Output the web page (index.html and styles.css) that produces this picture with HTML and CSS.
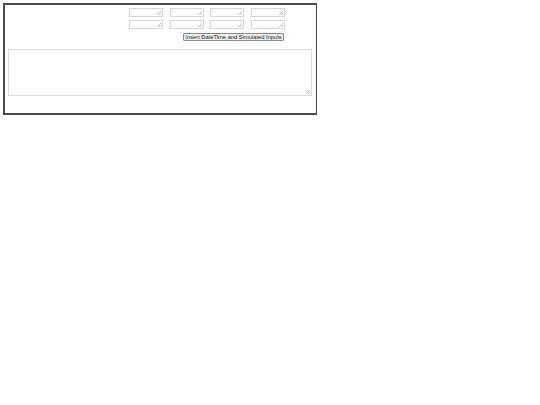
FILE: index.html
```html
<!DOCTYPE html>
<html>
<head>
<meta charset="utf-8">
<link rel="stylesheet" href="styles.css">
</head>
<body>
<div class="frame">
  <div class="inputs">
    <textarea class="cell"></textarea>
    <textarea class="cell"></textarea>
    <textarea class="cell"></textarea>
    <textarea class="cell"></textarea>
    <textarea class="cell"></textarea>
    <textarea class="cell"></textarea>
    <textarea class="cell"></textarea>
    <textarea class="cell"></textarea>
  </div>
  <div class="actions">
    <button class="insert">Insert DateTime and Simulated Inputs</button>
  </div>
  <textarea class="output"></textarea>
</div>
</body>
</html>
```
FILE: styles.css
```css
html, body {
  margin: 0;
  padding: 0;
  background: #fff;
}
body {
  padding: 3px;
  font-family: "Liberation Sans", Arial, sans-serif;
}
.frame {
  box-sizing: border-box;
  width: 314px;
  height: 112px;
  border: 2px solid #4a4a4a;
  border-right-width: 1.5px;
  padding: 3px 4px 0 3px;
  display: flex;
  flex-direction: column;
}
.inputs {
  display: grid;
  grid-template-columns: repeat(4, 34px);
  column-gap: 6.5px;
  row-gap: 3px;
  margin-left: 121px;
}
.cell,
.output {
  box-sizing: border-box;
  margin: 0;
  padding: 0;
  resize: none;
  background-color: #fff;
  background-image:
    linear-gradient(135deg, transparent 0 50%, #bdbdbd 50% 60%, transparent 60% 72%, #bdbdbd 72% 84%, transparent 84%);
  background-repeat: no-repeat;
  background-position: right 1px bottom 1px;
  background-size: 4px 4px;
}
.cell {
  width: 34px;
  height: 9px;
  border: 1px solid #d6d6d6;
  font-size: 6px;
}
.actions {
  display: flex;
  margin-left: 175px;
  margin-top: 3.5px;
}
.insert {
  box-sizing: border-box;
  width: 101px;
  height: 8px;
  margin: 0;
  padding: 0;
  border: 1px solid #8a8a8a;
  border-radius: 1px;
  background: #efefef;
  color: #222;
  font-family: "Liberation Sans", Arial, sans-serif;
  font-size: 5.75px;
  line-height: 6px;
  text-align: center;
  white-space: nowrap;
  overflow: hidden;
}
.output {
  width: 304px;
  height: 47px;
  margin-top: 8px;
  border: 1px solid #dadada;
}
```
